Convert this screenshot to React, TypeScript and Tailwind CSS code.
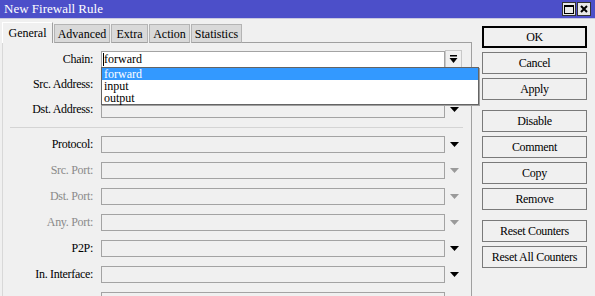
import React from "react";

type Row = {
  label: string;
  disabled?: boolean;
  white?: boolean;
  arrow?: "black" | "gray" | "none";
};

const topRows: Row[] = [
  { label: "Chain:", white: true, arrow: "none" },
  { label: "Src. Address:", arrow: "black" },
  { label: "Dst. Address:", arrow: "black" },
];

const bottomRows: Row[] = [
  { label: "Protocol:", arrow: "black" },
  { label: "Src. Port:", disabled: true, arrow: "gray" },
  { label: "Dst. Port:", disabled: true, arrow: "gray" },
  { label: "Any. Port:", disabled: true, arrow: "gray" },
  { label: "P2P:", arrow: "black" },
  { label: "In. Interface:", arrow: "black" },
  { label: "", arrow: "none" },
];

const tabs = [
  { name: "General", w: "w-[51px]" },
  { name: "Advanced", w: "w-[56px]" },
  { name: "Extra", w: "w-[37px]" },
  { name: "Action", w: "w-[41px]" },
  { name: "Statistics", w: "w-[51px]" },
];

const buttonGroups = [
  ["OK", "Cancel", "Apply"],
  ["Disable", "Comment", "Copy", "Remove"],
  ["Reset Counters", "Reset All Counters"],
];

function DownArrow({ gray }: { gray?: boolean }) {
  return (
    <svg width="9" height="5" viewBox="0 0 9 5">
      <polygon points="0,0 9,0 4.5,5" fill={gray ? "#9a9a9a" : "#000"} />
    </svg>
  );
}

function FormRow({ row, first }: { row: Row; first?: boolean }) {
  return (
    <div className="relative flex items-center h-[17px]">
      <div
        className={`w-[90px] text-right text-[12px] leading-[17px] whitespace-nowrap tracking-[-0.3px] ${
          row.disabled ? "text-[#8a8a8a]" : "text-black"
        }`}
      >
        {row.label}
      </div>
      <div
        className={`ml-[8px] w-[344px] h-[17px] border border-[#a3a3a3] flex items-center text-[12px] ${
          row.white ? "bg-white" : "bg-[#f0f0f0]"
        }`}
      >
        {first && (
          <>
            <span className="w-px h-[13px] bg-black ml-[1px]" />
            <span className="leading-[15px]">forward</span>
          </>
        )}
      </div>
      {first ? (
        <div className="w-[17px] h-[18px] -mt-[1px] border border-[#c8c8c8] bg-[#f0f0f0] flex items-center justify-center">
          <svg width="9" height="9" viewBox="0 0 9 9">
            <rect x="1" y="0" width="7" height="1.5" fill="#000" />
            <polygon points="0.5,3 8.5,3 4.5,8" fill="#000" />
          </svg>
        </div>
      ) : (
        <div className="w-[18px] flex items-center justify-center">
          {row.arrow !== "none" && <DownArrow gray={row.arrow === "gray"} />}
        </div>
      )}
      {first && (
        <div className="absolute left-[98px] top-[16px] w-[378px] bg-white border border-[#646464] shadow-[1px_1px_0_#a0a0a0] z-10 text-[12px] leading-[12px]">
          <div className="bg-[#3399ff] text-white pl-[2px] h-[12px]">forward</div>
          <div className="pl-[2px] h-[12px]">input</div>
          <div className="pl-[2px] h-[12px]">output</div>
        </div>
      )}
    </div>
  );
}

export default function App() {
  return (
    <div className="w-[595px] h-[296px] bg-[#f0f0f0] overflow-hidden flex flex-col text-black font-['Liberation_Serif','Times_New_Roman',serif]">
      {/* title bar */}
      <div className="h-[18px] bg-[#4c4fc9] flex items-center justify-between pl-[4px] pr-[4px] shrink-0">
        <span className="text-white text-[13px] leading-[16px]">New Firewall Rule</span>
        <div className="flex gap-[1px]">
          <div className="w-[14px] h-[14px] bg-[#e8e8e8] border border-[#333] flex items-center justify-center">
            <div className="w-[10px] h-[9px] border border-black border-t-2" />
          </div>
          <div className="w-[14px] h-[14px] bg-[#e8e8e8] border border-[#333] flex items-center justify-center">
            <svg width="8" height="8" viewBox="0 0 8 8">
              <path d="M1 1 L7 7 M7 1 L1 7" stroke="#000" strokeWidth="2" />
            </svg>
          </div>
        </div>
      </div>
      <div className="h-px bg-[#c8c8e0] shrink-0" />

      <div className="flex flex-1 min-h-0">
        {/* left side */}
        <div className="w-[472px] pl-[2px] flex flex-col pt-[3px]">
          <div className="flex items-end h-[21px] text-[12px]">
            {tabs.map((t, i) =>
              i === 0 ? (
                <div
                  key={t.name}
                  className={`h-[21px] ${t.w} bg-[#f0f0f0] border-l border-t border-r border-[#a0a0a0] border-l-white border-t-white flex items-center justify-center`}
                >
                  {t.name}
                </div>
              ) : (
                <div
                  key={t.name}
                  className={`h-[19px] ${t.w} ml-[1px] bg-[#d9d9d9] border border-[#b4b4b4] border-b-[#a0a0a0] flex items-center justify-center`}
                >
                  {t.name}
                </div>
              )
            )}
            <div className="flex-1 border-b border-[#a0a0a0] h-px" />
          </div>
          <div className="flex-1 border-l border-r border-l-[#d8d8d8] border-r-[#a0a0a0] pt-[8px] flex flex-col">
            <div className="flex flex-col gap-[8px]">
              {topRows.map((r, i) => (
                <FormRow key={r.label} row={r} first={i === 0} />
              ))}
            </div>
            <div className="mt-[9px] mb-[8px] ml-[7px] w-[453px] h-px bg-[#d4d4d4]" />
            <div className="flex flex-col gap-[9px]">
              {bottomRows.map((r, i) => (
                <FormRow key={i} row={r} />
              ))}
            </div>
          </div>
        </div>

        {/* right side buttons */}
        <div className="pl-[10px] pt-[7px] flex flex-col gap-[10px]">
          {buttonGroups.map((g, gi) => (
            <div key={gi} className="flex flex-col gap-[4px]">
              {g.map((b) => (
                <div
                  key={b}
                  className={`w-[105px] h-[22px] flex items-center justify-center text-[12px] tracking-[-0.3px] bg-[#f0f0f0] ${
                    b === "OK" ? "border-2 border-black" : "border border-[#7a7a7a]"
                  }`}
                >
                  {b}
                </div>
              ))}
            </div>
          ))}
        </div>
      </div>
    </div>
  );
}
